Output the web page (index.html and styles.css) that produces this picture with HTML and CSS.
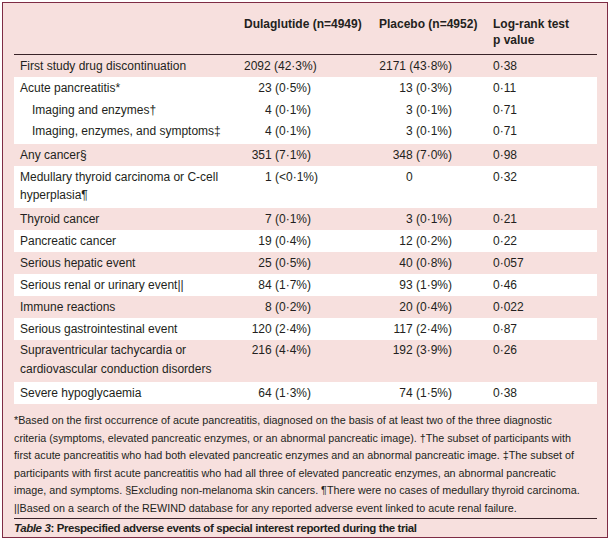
FILE: index.html
```html
<!DOCTYPE html>
<html lang="en">
<head>
<meta charset="utf-8">
<title>Table 3</title>
<link rel="stylesheet" href="styles.css">
</head>
<body>
<div class="panel">
  <table class="data">
    <colgroup>
      <col class="c-label"><col class="c-dula"><col class="c-plac"><col class="c-p">
    </colgroup>
    <thead>
      <tr>
        <th></th>
        <th>Dulaglutide (n=4949)</th>
        <th>Placebo (n=4952)</th>
        <th>Log-rank test<br>p value</th>
      </tr>
    </thead>
    <tbody>
      <tr class="band-pink">
        <td class="lbl">First study drug discontinuation</td>
        <td class="num d">2092 (42·3%)</td>
        <td class="num p">2171 (43·8%)</td>
        <td class="pv">0·38</td>
      </tr>
      <tr class="band-white">
        <td class="lbl">Acute pancreatitis*</td>
        <td class="num d">23 (0·5%)</td>
        <td class="num p">13 (0·3%)</td>
        <td class="pv">0·11</td>
      </tr>
      <tr class="band-white mid">
        <td class="lbl sub">Imaging and enzymes†</td>
        <td class="num d">4 (0·1%)</td>
        <td class="num p">3 (0·1%)</td>
        <td class="pv">0·71</td>
      </tr>
      <tr class="band-white last">
        <td class="lbl sub">Imaging, enzymes, and symptoms‡</td>
        <td class="num d">4 (0·1%)</td>
        <td class="num p">3 (0·1%)</td>
        <td class="pv">0·71</td>
      </tr>
      <tr class="band-pink">
        <td class="lbl">Any cancer§</td>
        <td class="num d">351 (7·1%)</td>
        <td class="num p">348 (7·0%)</td>
        <td class="pv">0·98</td>
      </tr>
      <tr class="band-white two">
        <td class="lbl">Medullary thyroid carcinoma or C-cell hyperplasia¶</td>
        <td class="num d"><span class="hang">1 (&lt;0·1%)</span></td>
        <td class="num p">0<span class="ghost"> (0·0%)</span></td>
        <td class="pv">0·32</td>
      </tr>
      <tr class="band-pink">
        <td class="lbl">Thyroid cancer</td>
        <td class="num d">7 (0·1%)</td>
        <td class="num p">3 (0·1%)</td>
        <td class="pv">0·21</td>
      </tr>
      <tr class="band-white">
        <td class="lbl">Pancreatic cancer</td>
        <td class="num d">19 (0·4%)</td>
        <td class="num p">12 (0·2%)</td>
        <td class="pv">0·22</td>
      </tr>
      <tr class="band-pink">
        <td class="lbl">Serious hepatic event</td>
        <td class="num d">25 (0·5%)</td>
        <td class="num p">40 (0·8%)</td>
        <td class="pv">0·057</td>
      </tr>
      <tr class="band-white">
        <td class="lbl">Serious renal or urinary event||</td>
        <td class="num d">84 (1·7%)</td>
        <td class="num p">93 (1·9%)</td>
        <td class="pv">0·46</td>
      </tr>
      <tr class="band-pink">
        <td class="lbl">Immune reactions</td>
        <td class="num d">8 (0·2%)</td>
        <td class="num p">20 (0·4%)</td>
        <td class="pv">0·022</td>
      </tr>
      <tr class="band-white">
        <td class="lbl">Serious gastrointestinal event</td>
        <td class="num d">120 (2·4%)</td>
        <td class="num p">117 (2·4%)</td>
        <td class="pv">0·87</td>
      </tr>
      <tr class="band-pink two-b">
        <td class="lbl">Supraventricular tachycardia or cardiovascular conduction disorders</td>
        <td class="num d">216 (4·4%)</td>
        <td class="num p">192 (3·9%)</td>
        <td class="pv">0·26</td>
      </tr>
      <tr class="band-white">
        <td class="lbl">Severe hypoglycaemia</td>
        <td class="num d">64 (1·3%)</td>
        <td class="num p">74 (1·5%)</td>
        <td class="pv">0·38</td>
      </tr>
    </tbody>
  </table>
  <p class="notes">*Based on the first occurrence of acute pancreatitis, diagnosed on the basis of at least two of the three diagnostic<br>criteria (symptoms, elevated pancreatic enzymes, or an abnormal pancreatic image). †The subset of participants with<br>first acute pancreatitis who had both elevated pancreatic enzymes and an abnormal pancreatic image. ‡The subset of<br>participants with first acute pancreatitis who had all three of elevated pancreatic enzymes, an abnormal pancreatic<br>image, and symptoms. §Excluding non-melanoma skin cancers. ¶There were no cases of medullary thyroid carcinoma.<br>||Based on a search of the REWIND database for any reported adverse event linked to acute renal failure.</p>
  <p class="caption"><em>Table 3</em>: Prespecified adverse events of special interest reported during the trial</p>
</div>
</body>
</html>
```

FILE: styles.css
```css
html, body {
  margin: 0;
  padding: 0;
  background: #ffffff;
}

body {
  padding: 2px 0 0 2px;
  font-family: "Liberation Sans", Arial, sans-serif;
  color: #231f20;
}

.panel {
  width: 583px;
  border: 1px solid #7e2c45;
  background: #f7e0de;
  padding: 0 10px 0 11px;
}

.data {
  width: 583px;
  border-collapse: collapse;
  table-layout: fixed;
  font-size: 12px;
}

.c-label { width: 230px; }
.c-dula { width: 135px; }
.c-plac { width: 114px; }
.c-p { width: 104px; }

.data th {
  text-align: left;
  vertical-align: top;
  font-weight: bold;
  line-height: 16px;
  padding: 13px 0 6px 0;
  border-bottom: 1px solid #3a2328;
  white-space: nowrap;
}

.data td {
  line-height: 18px;
  padding: 2px 0 2px 0;
  vertical-align: top;
}

.band-white td { background: #ffffff; }

.mid td { padding-bottom: 1px; }
.last td { padding-bottom: 4px; }
.two td { padding-bottom: 4px; }
.two-b td {
  line-height: 19px;
  padding-top: 1px;
  padding-bottom: 3px;
}

.data td.lbl {
  padding-left: 6px;
  padding-right: 8px;
}

.data td.lbl.sub {
  padding-left: 18px;
}

.num {
  text-align: right;
  white-space: nowrap;
}

.data td.num.d { padding-right: 68px; }
.data td.num.p { padding-right: 41px; }

.hang { margin-right: -7px; }
.ghost { visibility: hidden; }

.pv { white-space: nowrap; }

.notes {
  margin: 0;
  padding: 8px 0 1px 0;
  font-size: 10.75px;
  line-height: 17.5px;
  white-space: nowrap;
  border-bottom: 1px solid #3a2328;
}

.caption {
  margin: 0;
  padding: 1px 0 1px 0;
  font-size: 11.5px;
  letter-spacing: -0.4px;
  line-height: 16px;
  font-weight: bold;
}

.caption em {
  font-style: italic;
}
```
